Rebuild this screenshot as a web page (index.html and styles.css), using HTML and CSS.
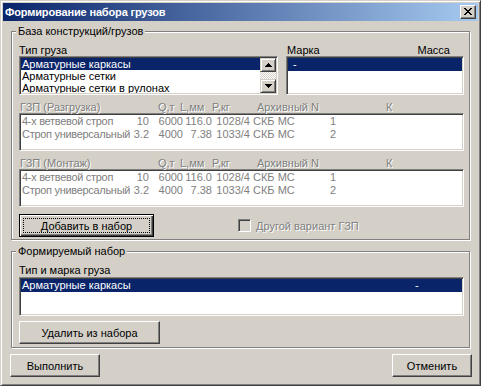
FILE: index.html
```html
<!DOCTYPE html>
<html lang="ru">
<head>
<meta charset="utf-8">
<title>Формирование набора грузов</title>
<link rel="stylesheet" href="styles.css">
</head>
<body>
<div class="window">
  <div class="titlebar">
    <span class="title">Формирование набора грузов</span>
    <span class="close-btn"><svg width="8" height="7" viewBox="0 0 8 7" shape-rendering="crispEdges"><path d="M0 0h2v1H0zM6 0h2v1H6zM1 1h2v1H1zM5 1h2v1H5zM2 2h4v1H2zM3 3h2v1H3zM2 4h4v1H2zM1 5h2v1H1zM5 5h2v1H5zM0 6h2v1H0zM6 6h2v1H6z" fill="#000"/></svg></span>
  </div>
  <div class="client">
    <fieldset class="group group-base">
      <legend>База конструкций/грузов</legend>
      <div class="top-row">
        <div class="col-type">
          <div class="label">Тип груза</div>
          <div class="listbox lb-type">
            <div class="items">
              <div class="item selected">Арматурные каркасы</div>
              <div class="item">Арматурные сетки</div>
              <div class="item">Арматурные сетки в рулонах</div>
            </div>
            <div class="vscroll">
              <div class="sbtn"><svg width="7" height="4" viewBox="0 0 7 4" shape-rendering="crispEdges"><path d="M3 0h1v1H3zM2 1h3v1H2zM1 2h5v1H1zM0 3h7v1H0z" fill="#000"/></svg></div>
              <div class="track"></div>
              <div class="sbtn"><svg width="7" height="4" viewBox="0 0 7 4" shape-rendering="crispEdges"><path d="M0 0h7v1H0zM1 1h5v1H1zM2 2h3v1H2zM3 3h1v1H3z" fill="#000"/></svg></div>
            </div>
          </div>
        </div>
        <div class="col-mark">
          <div class="label split"><span>Марка</span><span>Масса</span></div>
          <div class="listbox lb-mark">
            <div class="items">
              <div class="item selected mark-item">-</div>
            </div>
          </div>
        </div>
      </div>

      <div class="gzp-head disabled">
        <span>ГЗП (Разгрузка)</span><span>Q,т</span><span>L,мм</span><span>P,кг</span><span>Архивный N</span><span>К</span>
      </div>
      <div class="listbox lb-gzp">
        <div class="items">
          <div class="gzp-row"><span class="name">4-х ветвевой строп</span><span class="r">10</span><span class="r">6000</span><span class="r">116.0</span><span class="r">1028/4</span><span class="arch">СКБ МС</span><span>1</span></div>
          <div class="gzp-row"><span class="name">Строп универсальный</span><span class="r">3.2</span><span class="r">4000</span><span class="r">7.38</span><span class="r">1033/4</span><span class="arch">СКБ МС</span><span>2</span></div>
        </div>
      </div>

      <div class="gzp-head disabled second">
        <span>ГЗП (Монтаж)</span><span>Q,т</span><span>L,мм</span><span>P,кг</span><span>Архивный N</span><span>К</span>
      </div>
      <div class="listbox lb-gzp">
        <div class="items">
          <div class="gzp-row"><span class="name">4-х ветвевой строп</span><span class="r">10</span><span class="r">6000</span><span class="r">116.0</span><span class="r">1028/4</span><span class="arch">СКБ МС</span><span>1</span></div>
          <div class="gzp-row"><span class="name">Строп универсальный</span><span class="r">3.2</span><span class="r">4000</span><span class="r">7.38</span><span class="r">1033/4</span><span class="arch">СКБ МС</span><span>2</span></div>
        </div>
      </div>

      <div class="action-row">
        <button class="btn btn-default btn-add"><span class="focus">Добавить в набор</span></button>
        <span class="checkbox"></span>
        <span class="check-label disabled">Другой вариант ГЗП</span>
      </div>
    </fieldset>

    <fieldset class="group group-set">
      <legend>Формируемый набор</legend>
      <div class="label label-set">Тип и марка груза</div>
      <div class="listbox lb-set">
        <div class="items">
          <div class="item selected set-item"><span>Арматурные каркасы</span><span>-</span></div>
        </div>
      </div>
      <button class="btn btn-remove">Удалить из набора</button>
    </fieldset>

    <div class="bottom-row">
      <button class="btn btn-ok">Выполнить</button>
      <button class="btn btn-cancel">Отменить</button>
    </div>
  </div>
</div>
</body>
</html>
```

FILE: styles.css
```css
* { box-sizing: border-box; }
html, body { margin: 0; padding: 0; }
body {
  width: 481px;
  height: 386px;
  background: #d4d0c8;
  font-family: "Liberation Sans", Arial, sans-serif;
  font-size: 11px;
  color: #000;
  overflow: hidden;
}
.window {
  width: 481px;
  height: 386px;
  background: #d4d0c8;
  border: 1px solid;
  border-color: #d4d0c8 #404040 #404040 #d4d0c8;
  box-shadow: inset 1px 1px #fff, inset -1px -1px #808080;
  padding: 2px;
  display: flex;
  flex-direction: column;
}
.titlebar {
  height: 18px;
  flex: none;
  background: linear-gradient(to right, #0a246a, #a6caf0);
  display: flex;
  align-items: center;
  justify-content: space-between;
  padding: 0 2px 0 2px;
}
.title {
  color: #fff;
  font-weight: bold;
  font-size: 11px;
  line-height: 18px;
  letter-spacing: -0.15px;
  white-space: nowrap;
}
.close-btn {
  width: 16px;
  height: 14px;
  background: #d4d0c8;
  border: 1px solid;
  border-color: #fff #404040 #404040 #fff;
  box-shadow: inset -1px -1px #808080;
  display: flex;
  align-items: center;
  justify-content: center;
  padding: 0 1px 1px 0;
}
.close-btn svg { display: block; }
.client {
  flex: 1;
  padding: 0 6px 0 7px;
  display: flex;
  flex-direction: column;
}
.group {
  margin: 4px 2px 0 1px;
  padding: 6px 5px 2px 7px;
  border: 1px solid #808080;
  box-shadow: inset 1px 1px #fff, 1px 1px #fff;
  min-inline-size: 0;
}
.group legend {
  padding: 0 2px;
  margin-left: -3px;
  line-height: 13px;
  font-size: 11px;
  background: #d4d0c8;
}
.group-set { margin-top: 5px; padding-bottom: 3px; }
.label {
  line-height: 12px;
  height: 12px;
  white-space: nowrap;
}
.label-set { line-height: 13px; height: 13px; }
.split {
  display: flex;
  justify-content: space-between;
  padding: 0 14px 0 1px;
}
.top-row {
  display: flex;
  gap: 8px;
}
.col-type { width: 259px; }
.col-mark { flex: 1; }
.listbox {
  background: #fff;
  border: 1px solid;
  border-color: #808080 #fff #fff #808080;
  box-shadow: inset 1px 1px #404040, inset -1px -1px #d4d0c8;
  padding: 1px;
  overflow: hidden;
}
.items { flex: 1; overflow: hidden; }
.item {
  height: 13px;
  line-height: 13px;
  padding-left: 1px;
  white-space: nowrap;
}
.item.selected { background: #0a246a; color: #fff; }
.lb-type { height: 39px; display: flex; }
.lb-type .item { height: 12px; line-height: 12px; }
.lb-mark { height: 39px; }
.mark-item { padding-left: 5px; }
.vscroll {
  width: 16px;
  flex: none;
  display: flex;
  flex-direction: column;
}
.sbtn {
  height: 14px;
  background: #d4d0c8;
  border: 1px solid;
  border-color: #d4d0c8 #404040 #404040 #d4d0c8;
  box-shadow: inset 1px 1px #fff, inset -1px -1px #808080;
  display: flex;
  align-items: center;
  justify-content: center;
}
.sbtn svg { display: block; }
.track {
  flex: 1;
  background: repeating-conic-gradient(#fff 0 25%, #d4d0c8 0 50%) 0 0 / 2px 2px;
}
.disabled { color: #808080; text-shadow: 1px 1px #fff; }
.gzp-head {
  margin-top: 6px;
  height: 12px;
  line-height: 12px;
  display: grid;
  grid-template-columns: 138px 22px 32px 45px 129px 1fr;
  padding-left: 1px;
  white-space: nowrap;
}
.gzp-head.second { margin-top: 6px; }
.lb-gzp { height: 38px; }
.lb-gzp .items { color: #808080; }
.gzp-row {
  height: 13px;
  line-height: 13px;
  display: grid;
  grid-template-columns: 104px 23px 34px 29px 38px 80px 1fr;
  padding-left: 1px;
  white-space: nowrap;
}
.gzp-row .name { letter-spacing: -0.3px; }
.gzp-row .r { text-align: right; }
.gzp-row .arch { padding-left: 3px; }
.btn {
  font: inherit;
  color: #000;
  background: #d4d0c8;
  border: 1px solid;
  border-color: #fff #404040 #404040 #fff;
  box-shadow: inset -1px -1px #808080;
  height: 23px;
  padding: 0;
  margin: 0;
  display: flex;
  align-items: center;
  justify-content: center;
}
.btn-default {
  border: 1px solid #000;
  box-shadow: inset 1px 1px #fff, inset -1px -1px #404040, inset -2px -2px #808080;
  padding: 3px;
}
.btn-default .focus {
  flex: 1;
  align-self: stretch;
  outline: 1px dotted #000;
  outline-offset: -1px;
  display: flex;
  align-items: center;
  justify-content: center;
}
.action-row {
  margin-top: 7px;
  display: flex;
  align-items: center;
}
.btn-add { width: 135px; }
.checkbox {
  width: 13px;
  height: 13px;
  margin-left: 84px;
  background: #d4d0c8;
  border: 1px solid;
  border-color: #808080 #fff #fff #808080;
  box-shadow: inset 1px 1px #404040, inset -1px -1px #d4d0c8;
}
.check-label { margin-left: 5px; white-space: nowrap; }
.lb-set { height: 39px; }
.set-item {
  display: grid;
  grid-template-columns: 393px 1fr;
}
.btn-remove { width: 141px; margin-top: 5px; }
.bottom-row {
  margin-top: 6px;
  display: flex;
  justify-content: space-between;
}
.btn-ok { width: 90px; }
.btn-cancel { width: 80px; }
```
